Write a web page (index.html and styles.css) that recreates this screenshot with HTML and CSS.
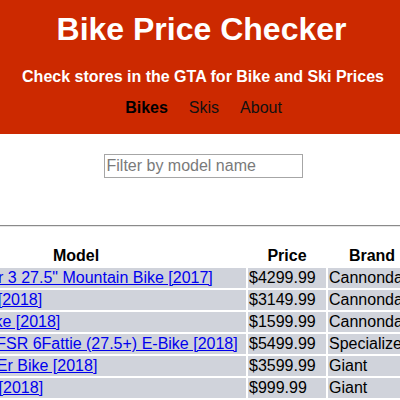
FILE: index.html
```html
<!DOCTYPE html>
<html lang="en">
<head>
<meta charset="utf-8">
<title>Bike Price Checker</title>
<link rel="stylesheet" href="styles.css">
</head>
<body>
<header class="masthead">
  <h1 class="title">Bike Price Checker</h1>
  <h3 class="subtitle">Check stores in the GTA for Bike and Ski Prices</h3>
  <nav class="nav">
    <a class="nav-link active" href="#">Bikes</a>
    <a class="nav-link" href="#">Skis</a>
    <a class="nav-link" href="#">About</a>
  </nav>
</header>
<div class="filter">
  <input class="filter-input" type="text" placeholder="Filter by model name">
</div>
<hr class="rule">
<div class="table-wrap">
  <table class="bikes">
    <thead>
      <tr>
        <th class="col-model">Model</th>
        <th class="col-price">Price</th>
        <th class="col-brand">Brand</th>
        <th class="col-store">Store</th>
      </tr>
    </thead>
    <tbody>
      <tr><td><a href="#">Men's Trigger 3 27.5" Mountain Bike [2017]</a></td><td>$4299.99</td><td>Cannondale</td><td>Sporting Life</td></tr>
      <tr><td><a href="#">Habit 4 Bike [2018]</a></td><td>$3149.99</td><td>Cannondale</td><td>Sporting Life</td></tr>
      <tr><td><a href="#">Treadwell Bike [2018]</a></td><td>$1599.99</td><td>Cannondale</td><td>Sporting Life</td></tr>
      <tr><td><a href="#">Turbo Levo  FSR 6Fattie (27.5+) E-Bike [2018]</a></td><td>$5499.99</td><td>Specialized</td><td>Sporting Life</td></tr>
      <tr><td><a href="#">Fathom 2 29Er Bike [2018]</a></td><td>$3599.99</td><td>Giant</td><td>Sporting Life</td></tr>
      <tr><td><a href="#">Talon 3 Bike [2018]</a></td><td>$999.99</td><td>Giant</td><td>Sporting Life</td></tr>
      <tr><td><a href="#">Escape 3 Bike [2018]</a></td><td>$549.99</td><td>Giant</td><td>Sporting Life</td></tr>
    </tbody>
  </table>
</div>
</body>
</html>
```
FILE: styles.css
```css
html, body {
  margin: 0;
  padding: 0;
  overflow: hidden;
}
body {
  font-family: "Liberation Sans", Arial, sans-serif;
  font-size: 16px;
  color: #000;
  background: #fff;
}
.masthead {
  background: #cc2900;
  height: 134px;
  box-sizing: border-box;
  padding-top: 11px;
  text-align: center;
}
.title {
  margin: 0;
  padding-left: 3px;
  font-size: 32px;
  line-height: 36px;
  font-weight: bold;
  color: #fff;
}
.subtitle {
  margin: 21px 0 0;
  padding-left: 6px;
  font-size: 16px;
  line-height: 18px;
  font-weight: bold;
  color: #fff;
}
.nav {
  margin-top: 13px;
  padding-left: 7px;
  display: flex;
  justify-content: center;
  gap: 21px;
  font-size: 16px;
  line-height: 18px;
}
.nav-link {
  color: #111;
  text-decoration: none;
}
.nav-link.active {
  font-weight: bold;
  color: #000;
}
.filter {
  display: flex;
  justify-content: center;
  padding-left: 6px;
  margin-top: 20px;
}
.filter-input {
  width: 199px;
  height: 24px;
  box-sizing: border-box;
  margin: 0;
  padding: 1px 2px;
  border: 1px solid #a6a6a6;
  border-radius: 0;
  font-family: "Liberation Sans", Arial, sans-serif;
  font-size: 16px;
  line-height: 18px;
  color: #000;
  outline: none;
}
.filter-input::placeholder {
  color: #7a7a7a;
}
.rule {
  margin: 47px 0 0;
  border: 0;
  border-top: 1px solid #8a8a8a;
  border-bottom: 1px solid #e6e6e6;
  height: 0;
}
.table-wrap {
  display: flex;
  justify-content: center;
  margin-top: 17px;
}
.bikes {
  flex: none;
  table-layout: fixed;
  width: 592px;
  border-collapse: separate;
  border-spacing: 2px;
  font-size: 16px;
}
.bikes th, .bikes td {
  box-sizing: border-box;
  padding: 1px;
  white-space: pre;
  overflow: hidden;
  line-height: 18px;
}
.bikes th {
  font-weight: bold;
  text-align: center;
}
.bikes td {
  background: #d0d3db;
  text-align: left;
}
.bikes td a {
  color: #0000ee;
  text-decoration: underline;
}
.col-model { width: 340px; }
.col-price { width: 78px; }
.col-brand { width: 88px; }
.col-store { width: 76px; }
```
